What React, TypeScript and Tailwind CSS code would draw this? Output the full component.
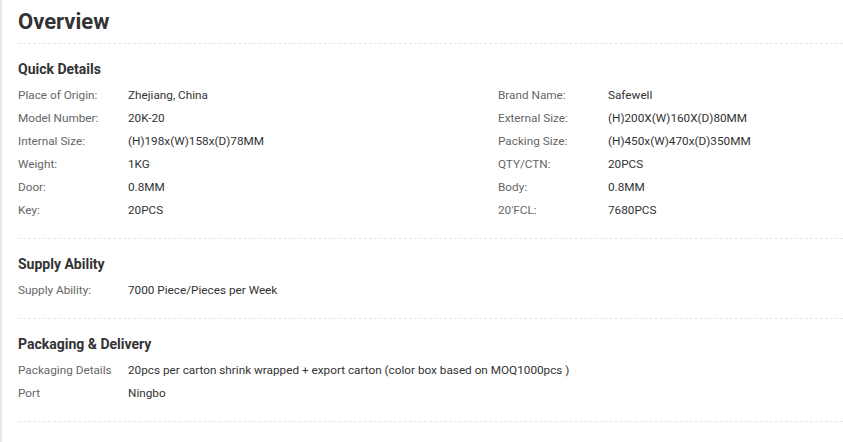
const quickDetails: [string, string][] = [
  ['Place of Origin:', 'Zhejiang, China'],
  ['Brand Name:', 'Safewell'],
  ['Model Number:', '20K-20'],
  ['External Size:', '(H)200X(W)160X(D)80MM'],
  ['Internal Size:', '(H)198x(W)158x(D)78MM'],
  ['Packing Size:', '(H)450x(W)470x(D)350MM'],
  ['Weight:', '1KG'],
  ['QTY/CTN:', '20PCS'],
  ['Door:', '0.8MM'],
  ['Body:', '0.8MM'],
  ['Key:', '20PCS'],
  ['20\'FCL:', '7680PCS'],
];

function Row({ label, value }: { label: string; value: string }) {
  return (
    <div className="flex text-[11.75px] leading-[23px]">
      <span className="w-[110px] shrink-0 text-[#666]">{label}</span>
      <span className="text-[#333]">{value}</span>
    </div>
  );
}

function Section({ title, children }: { title: string; children: React.ReactNode }) {
  return (
    <div className="border-b border-dashed border-[#e5e5e5] pt-[15px] pb-[16px]">
      <h3 className="mb-[5px] text-[14px] font-bold leading-[20px] text-[#333]">{title}</h3>
      {children}
    </div>
  );
}

export default function App() {
  return (
    <div
      className="min-h-[442px] w-[843px] border-l-2 border-[#e6eaf0] bg-white pl-4"
      style={{ fontFamily: 'Roboto, "Liberation Sans", sans-serif' }}
    >
      <div className="border-b border-dashed border-[#e5e5e5] pt-[7px] pb-[6px]">
        <h2 className="text-[22px] font-bold leading-[30px] text-[#333]">Overview</h2>
      </div>

      <Section title="Quick Details">
        <div className="grid grid-cols-[480px_1fr]">
          {quickDetails.map(([label, value]) => (
            <Row key={label} label={label} value={value} />
          ))}
        </div>
      </Section>

      <Section title="Supply Ability">
        <Row label="Supply Ability:" value="7000 Piece/Pieces per Week" />
      </Section>

      <Section title="Packaging & Delivery">
        <Row
          label="Packaging Details"
          value="20pcs per carton shrink wrapped + export carton (color box based on MOQ1000pcs )"
        />
        <Row label="Port" value="Ningbo" />
      </Section>
    </div>
  );
}
